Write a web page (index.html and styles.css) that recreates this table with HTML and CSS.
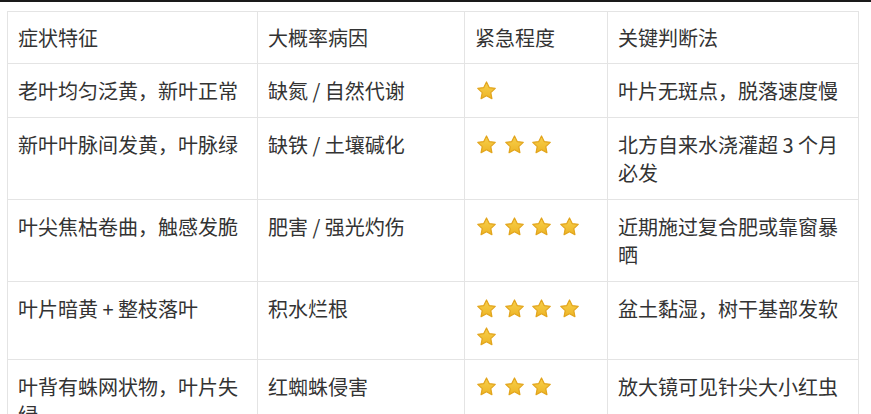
FILE: index.html
```html
<!DOCTYPE html>
<html lang="zh-CN">
<head>
<meta charset="utf-8">
<title>症状对照表</title>
<link rel="stylesheet" href="styles.css">
</head>
<body>
<svg class="defs" width="0" height="0" aria-hidden="true">
  <defs>
    <linearGradient id="sg" x1="0" y1="0" x2="0" y2="1">
      <stop offset="0" stop-color="#F8D04C"/>
      <stop offset="1" stop-color="#EDB526"/>
    </linearGradient>
    <symbol id="star" viewBox="0 0 24 24">
      <path d="M12 2.3 L15.1 8.6 L21.99 9.56 L16.9 14.4 L18.17 21.29 L12 18 L5.83 21.29 L7.1 14.4 L2.01 9.56 L8.9 8.6 Z" fill="url(#sg)" stroke="#E2A51D" stroke-width="1.4" stroke-linejoin="round"/>
    </symbol>
  </defs>
</svg>
<div class="topbar"></div>
<table class="grid">
  <colgroup>
    <col class="c1"><col class="c2"><col class="c3"><col class="c4">
  </colgroup>
  <thead>
    <tr><th>症状特征</th><th>大概率病因</th><th>紧急程度</th><th>关键判断法</th></tr>
  </thead>
  <tbody>
    <tr>
      <td>老叶均匀泛黄，新叶正常</td>
      <td>缺氮 / 自然代谢</td>
      <td><div class="stars"><svg class="star"><use href="#star"/></svg></div></td>
      <td>叶片无斑点，脱落速度慢</td>
    </tr>
    <tr>
      <td>新叶叶脉间发黄，叶脉绿</td>
      <td>缺铁 / 土壤碱化</td>
      <td><div class="stars"><svg class="star"><use href="#star"/></svg><svg class="star"><use href="#star"/></svg><svg class="star"><use href="#star"/></svg></div></td>
      <td>北方自来水浇灌超 3 个月必发</td>
    </tr>
    <tr>
      <td>叶尖焦枯卷曲，触感发脆</td>
      <td>肥害 / 强光灼伤</td>
      <td><div class="stars"><svg class="star"><use href="#star"/></svg><svg class="star"><use href="#star"/></svg><svg class="star"><use href="#star"/></svg><svg class="star"><use href="#star"/></svg></div></td>
      <td>近期施过复合肥或靠窗暴晒</td>
    </tr>
    <tr>
      <td>叶片暗黄 + 整枝落叶</td>
      <td>积水烂根</td>
      <td><div class="stars"><svg class="star"><use href="#star"/></svg><svg class="star"><use href="#star"/></svg><svg class="star"><use href="#star"/></svg><svg class="star"><use href="#star"/></svg><svg class="star"><use href="#star"/></svg></div></td>
      <td>盆土黏湿，树干基部发软</td>
    </tr>
    <tr>
      <td>叶背有蛛网状物，叶片失绿</td>
      <td>红蜘蛛侵害</td>
      <td><div class="stars"><svg class="star"><use href="#star"/></svg><svg class="star"><use href="#star"/></svg><svg class="star"><use href="#star"/></svg></div></td>
      <td>放大镜可见针尖大小红虫</td>
    </tr>
  </tbody>
</table>
</body>
</html>
```
FILE: styles.css
```css
html, body {
  margin: 0;
  padding: 0;
  background: #ffffff;
}
body {
  font-family: "Noto Sans CJK SC", "Noto Sans", sans-serif;
  color: #333333;
  overflow: hidden;
}
.defs {
  position: absolute;
  width: 0;
  height: 0;
}
.topbar {
  height: 2px;
  background: #1a1a1a;
  margin-bottom: 9px;
}
.grid {
  margin-left: 7px;
  width: 851px;
  border-collapse: collapse;
  table-layout: fixed;
  font-size: 20px;
  line-height: 28px;
}
.c1 { width: 250px; }
.c2 { width: 207px; }
.c3 { width: 143px; }
.c4 { width: 251px; }
.grid th,
.grid td {
  border: 1px solid #e4e4e4;
  text-align: left;
  vertical-align: top;
  font-weight: normal;
  padding: 12.5px 10px;
}
.grid th {
  padding: 12px 10px 11px;
}
.stars {
  display: flex;
  flex-wrap: wrap;
  column-gap: 6.5px;
  row-gap: 7px;
  padding-top: 3px;
  padding-left: 1px;
}
.star {
  width: 21px;
  height: 21px;
  display: block;
}
```
